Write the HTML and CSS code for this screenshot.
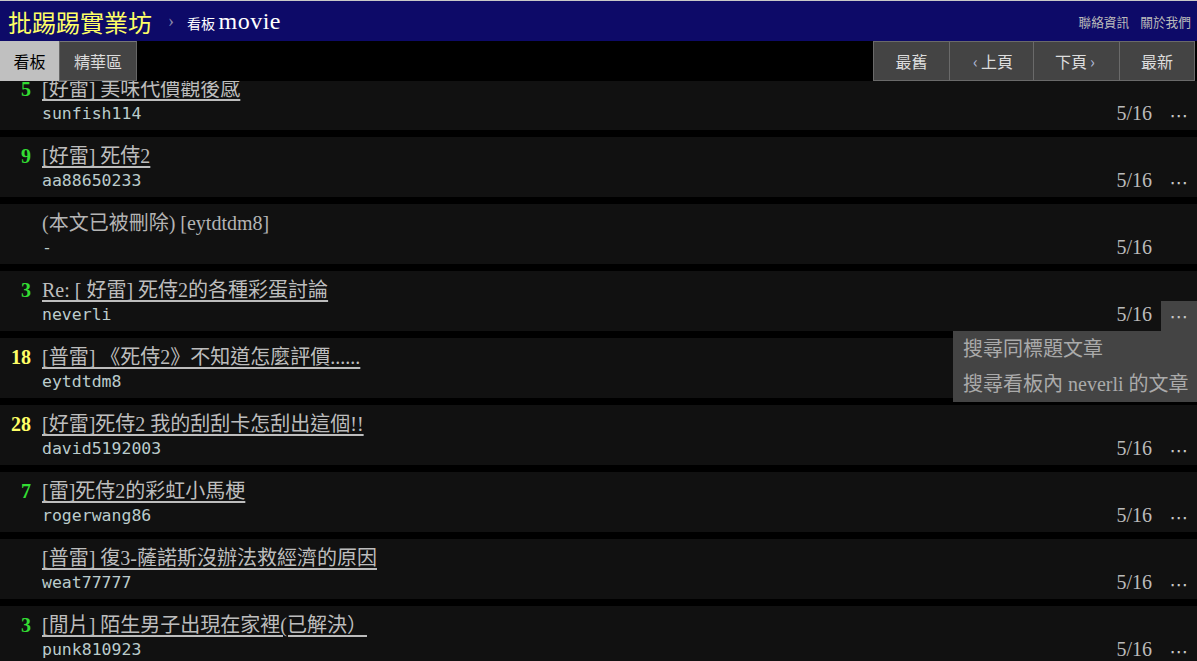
FILE: index.html
```html
<!DOCTYPE html>
<html lang="zh-Hant-TW">
<head>
    <meta charset="UTF-8">
    <meta name="viewport" content="width=device-width, initial-scale=1.0">
    <title>看板 movie 文章列表 - 批踢踢實業坊</title>
    <link rel="stylesheet" href="styles.css">
</head>
<body>
    <!-- 上方固定的標題列與操作列 -->
    <div id="topbar-container">
        <div id="topbar">
            <a class="brand" href="#">批踢踢實業坊</a>
            <span class="sep">›</span>
            <a class="board" href="#"><span class="board-label">看板 </span>movie</a>
            <div class="right">
                <a href="#">聯絡資訊</a>
                <a href="#">關於我們</a>
            </div>
        </div>
        <div id="action-bar">
            <div class="tabs">
                <a class="tab selected" href="#">看板</a>
                <a class="tab" href="#">精華區</a>
            </div>
            <div class="paging">
                <a class="btn" href="#">最舊</a>
                <a class="btn" href="#"><span class="arrow">‹</span> 上頁</a>
                <a class="btn" href="#">下頁 <span class="arrow">›</span></a>
                <a class="btn" href="#">最新</a>
            </div>
        </div>
    </div>

    <!-- 文章列表 -->
    <div class="r-list">
        <div class="r-ent">
            <div class="nrec"><span class="hl f2">5</span></div>
            <div class="title"><a href="#">[好雷] 美味代價觀後感</a></div>
            <div class="author">sunfish114</div>
            <div class="date">5/16</div>
            <div class="more">⋯</div>
        </div>
        <div class="r-ent">
            <div class="nrec"><span class="hl f2">9</span></div>
            <div class="title"><a href="#">[好雷] 死侍2</a></div>
            <div class="author">aa88650233</div>
            <div class="date">5/16</div>
            <div class="more">⋯</div>
        </div>
        <div class="r-ent">
            <div class="nrec"></div>
            <div class="title">(本文已被刪除) [eytdtdm8]</div>
            <div class="author">-</div>
            <div class="date">5/16</div>
            <div class="more"></div>
        </div>
        <div class="r-ent">
            <div class="nrec"><span class="hl f2">3</span></div>
            <div class="title"><a href="#">Re: [ 好雷] 死侍2的各種彩蛋討論</a></div>
            <div class="author">neverli</div>
            <div class="date">5/16</div>
            <div class="more open">⋯
                <div class="dropdown">
                    <div class="item"><a href="#">搜尋同標題文章</a></div>
                    <div class="item"><a href="#">搜尋看板內 neverli 的文章</a></div>
                </div>
            </div>
        </div>
        <div class="r-ent">
            <div class="nrec"><span class="hl f3">18</span></div>
            <div class="title"><a href="#">[普雷] 《死侍2》不知道怎麼評價......</a></div>
            <div class="author">eytdtdm8</div>
            <!-- 日期與選單鈕被上一列的下拉選單蓋住 -->
            <div class="date covered">5/16</div>
            <div class="more covered">⋯</div>
        </div>
        <div class="r-ent">
            <div class="nrec"><span class="hl f3">28</span></div>
            <div class="title"><a href="#">[好雷]死侍2 我的刮刮卡怎刮出這個!!</a></div>
            <div class="author">david5192003</div>
            <div class="date">5/16</div>
            <div class="more">⋯</div>
        </div>
        <div class="r-ent">
            <div class="nrec"><span class="hl f2">7</span></div>
            <div class="title"><a href="#">[雷]死侍2的彩虹小馬梗</a></div>
            <div class="author">rogerwang86</div>
            <div class="date">5/16</div>
            <div class="more">⋯</div>
        </div>
        <div class="r-ent">
            <div class="nrec"></div>
            <div class="title"><a href="#">[普雷] 復3-薩諾斯沒辦法救經濟的原因</a></div>
            <div class="author">weat77777</div>
            <div class="date">5/16</div>
            <div class="more">⋯</div>
        </div>
        <div class="r-ent">
            <div class="nrec"><span class="hl f2">3</span></div>
            <div class="title"><a href="#">[閒片] 陌生男子出現在家裡(已解決）</a></div>
            <div class="author">punk810923</div>
            <div class="date">5/16</div>
            <div class="more">⋯</div>
        </div>
    </div>
</body>
</html>
```

FILE: styles.css
```css
body {
    margin: 0;
    background-color: #000;
    color: #ccc;
    font-family: "Liberation Serif", "Noto Sans CJK TC", serif;
    font-size: 20px;
    overflow: hidden;
}
a {
    color: inherit;
    text-decoration: none;
}

/* 上方固定列 */
#topbar-container {
    position: fixed;
    top: 0;
    left: 0;
    right: 0;
    z-index: 10;
}
#topbar {
    height: 40px;
    border-top: 1px solid #c8c8c8;
    background-color: #0d0a68;
    display: flex;
    align-items: center;
    padding-left: 8px;
}
#topbar .brand {
    color: #ffff66;
    font-size: 24px;
}
#topbar .sep {
    color: #8888aa;
    font-size: 18px;
    margin: 0 13px 0 16px;
}
#topbar .board {
    color: #fff;
    font-size: 24px;
    letter-spacing: 0.5px;
}
#topbar .board-label {
    font-size: 14px;
    letter-spacing: 0;
}
#topbar .right {
    margin-left: auto;
    display: flex;
    gap: 11px;
    padding-right: 6px;
    font-family: "Noto Sans CJK TC", sans-serif;
    font-size: 12.7px;
    color: #bbb;
}

#action-bar {
    height: 40px;
    background-color: #000;
    display: flex;
    justify-content: space-between;
    font-family: "Noto Sans CJK TC", sans-serif;
    font-size: 16px;
}
.tabs {
    display: flex;
}
.tab {
    display: flex;
    align-items: center;
    justify-content: center;
    background-color: #444;
    color: #ddd;
    border: 1px solid #666;
    border-top-color: #777;
    width: 76px;
}
.tab.selected {
    background-color: #c0c0c0;
    color: #000;
    border-color: #c0c0c0;
    width: 57px;
}
.paging {
    display: grid;
    grid-template-columns: 77px 84px 86px 75px;
    margin-right: 2px;
}
.btn {
    display: flex;
    align-items: center;
    justify-content: center;
    background-color: #444;
    color: #ddd;
    border: 1px solid #6a6a6a;
    border-left: none;
}
.btn:first-child {
    border-left: 1px solid #6a6a6a;
}
.btn .arrow {
    color: #b0b8d8;
    margin: 0 3px;
}

/* 文章列表 */
.r-list {
    margin-top: 70px;
}
.r-ent {
    display: grid;
    grid-template-columns: 42px 1fr auto 36px;
    grid-template-rows: 22px 30px;
    grid-template-areas:
        "nrec title title title"
        ".    author date more";
    height: 52px;
    padding: 8px 0 0;
    margin-bottom: 7px;
    background-color: #111;
    position: relative;
}
.nrec {
    grid-area: nrec;
    text-align: right;
    padding-right: 11px;
    font-weight: bold;
    line-height: 22px;
}
.hl.f2 {
    color: #33dd33;
}
.hl.f3 {
    color: #ffff66;
}
.title {
    grid-area: title;
    line-height: 22px;
    color: #b4b4b4;
    white-space: nowrap;
}
.title a {
    color: #bdbdbd;
    text-decoration: underline;
    text-underline-offset: 3px;
}
.author {
    grid-area: author;
    align-self: center;
    padding-bottom: 3px;
    font-family: "DejaVu Sans Mono", monospace;
    font-size: 16.5px;
    color: #bcc;
}
.date {
    grid-area: date;
    align-self: center;
    padding-bottom: 3px;
    color: #bbb;
    padding-right: 9px;
}
.covered {
    visibility: hidden;
}
.more {
    grid-area: more;
    display: flex;
    align-items: center;
    justify-content: center;
    padding-bottom: 1px;
    color: #c8c8c8;
    font-family: "DejaVu Sans", sans-serif;
    font-size: 19px;
    position: relative;
}
.more.open {
    background-color: #444;
}

.dropdown {
    position: absolute;
    top: 100%;
    right: 0;
    width: 244px;
    padding: 1px 0 0;
    background-color: #444;
    z-index: 5;
    visibility: visible;
    font-family: "Liberation Serif", "Noto Sans CJK TC", serif;
    font-size: 20px;
}
.dropdown .item {
    height: 35px;
    line-height: 35px;
    padding: 0 10px;
    color: #aaa;
    white-space: nowrap;
}
```
